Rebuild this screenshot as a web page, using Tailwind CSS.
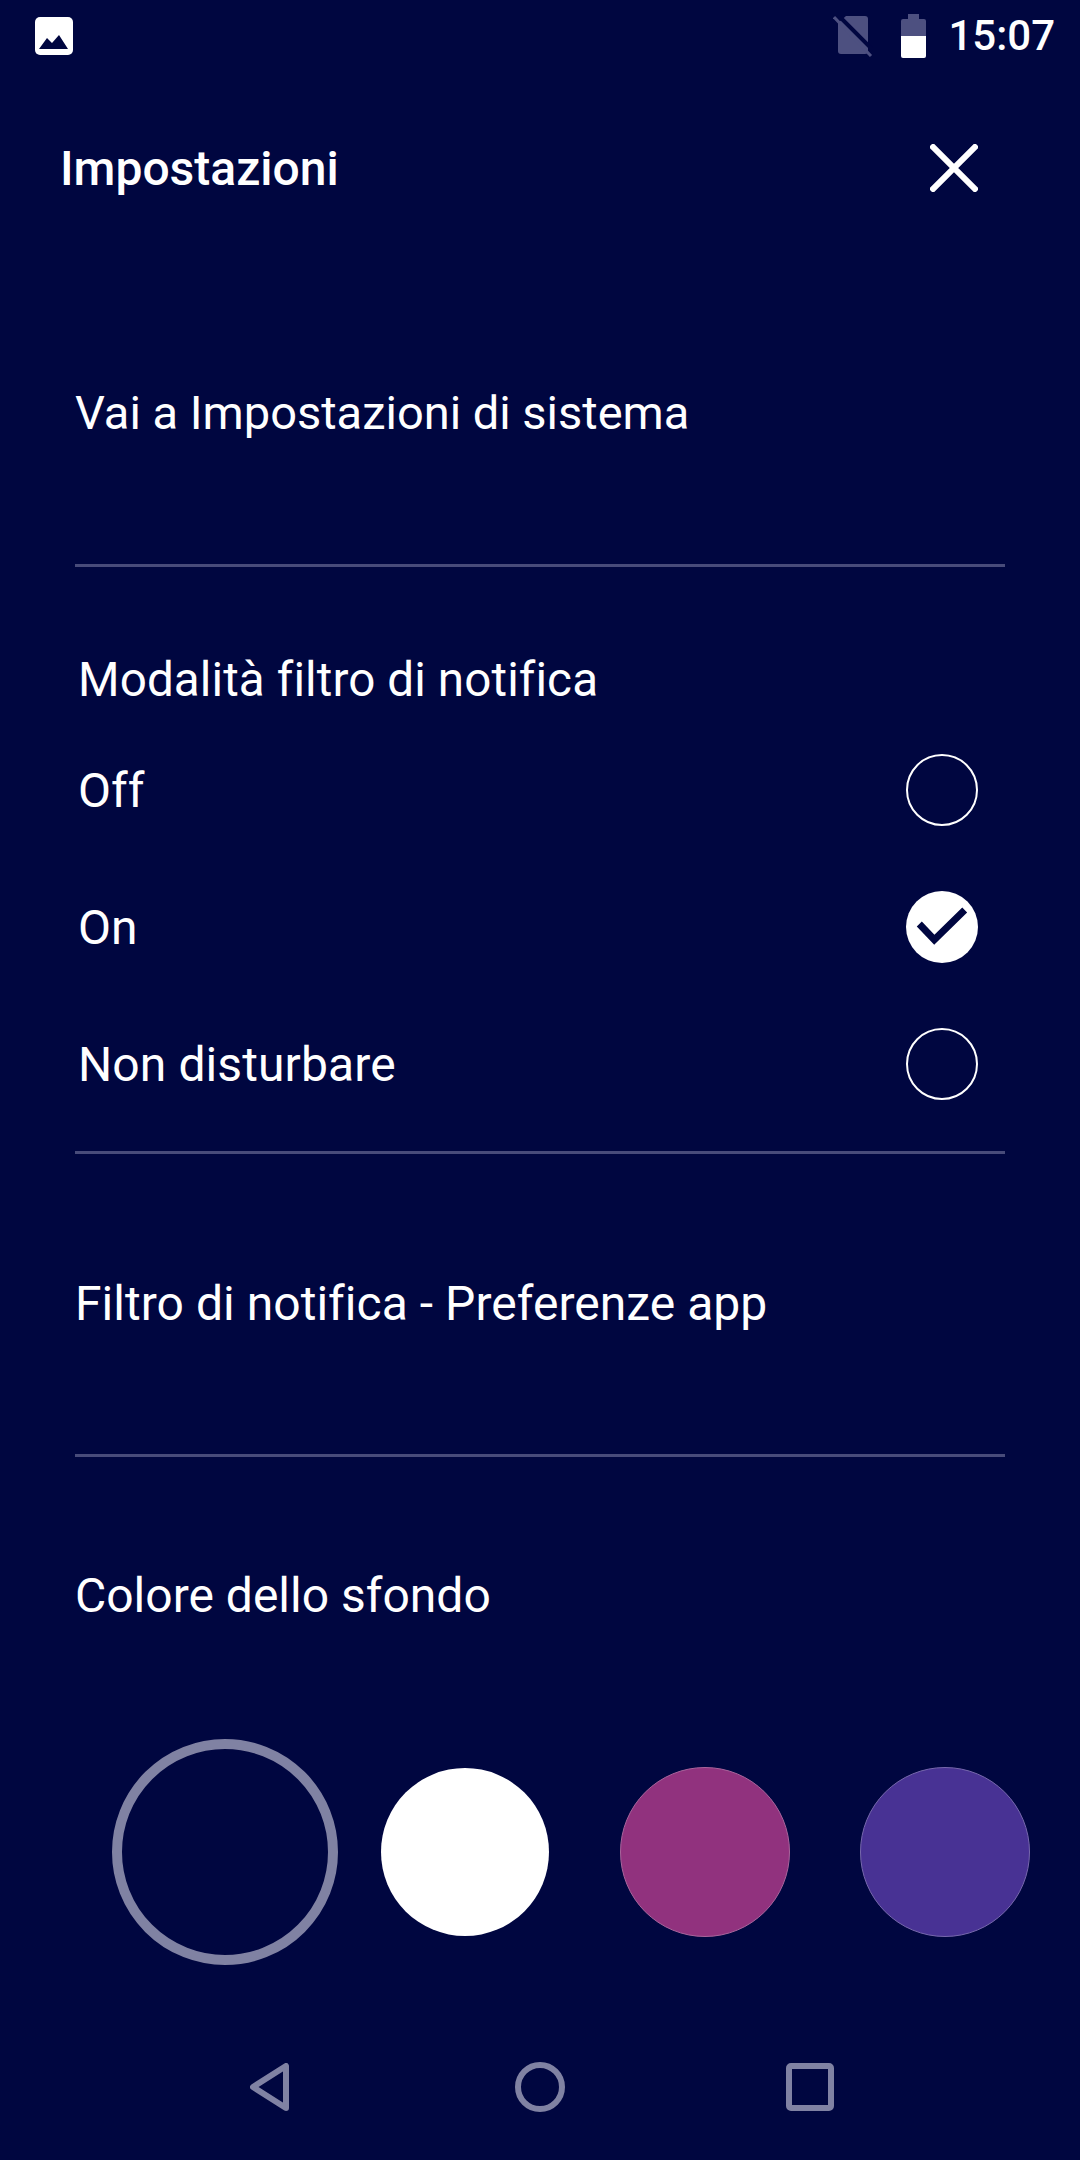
<!DOCTYPE html>
<html>
  <head>
    <title>Impostazioni</title>
    <script src="https://cdn.jsdelivr.net/npm/@tailwindcss/browser@4"></script>
  </head>
  <body class="bg-[#000640]">
    <div class="w-[1080px] h-[2160px] flex flex-col bg-[#000640] text-white font-['Roboto',sans-serif]">
      <!-- status bar -->
      <div class="h-[72px] pl-[35px] pr-[25px] flex items-center">
        <svg class="w-[38px] h-[38px]" viewBox="0 0 38 38">
          <rect width="38" height="38" rx="5" fill="#fff" />
          <path d="M4 32 L12 21 L17 26 L24 18 L33 32 Z" fill="#000640" />
        </svg>
        <div class="ml-auto flex items-center">
          <svg class="w-[40px] h-[42px]" viewBox="0 0 40 42">
            <path d="M5 8 V36 Q5 39 8 39 H32 Q35 39 35 36 V4 Q35 1 32 1 H13 Z" fill="#4d5080" />
            <path d="M4 -1 L40 35" stroke="#000640" stroke-width="4" />
            <path d="M1 2 L38 41" stroke="#4d5080" stroke-width="3" />
          </svg>
          <svg class="ml-[28px] w-[25px] h-[44px]" viewBox="0 0 25 44">
            <path d="M7 0 H18 V5 H23 Q25 5 25 7 V22 H0 V7 Q0 5 2 5 H7 Z" fill="#4d5080" />
            <path d="M0 22 H25 V42 Q25 44 23 44 H2 Q0 44 0 42 Z" fill="#fff" />
          </svg>
          <span class="ml-[22px] text-[42px] leading-none font-medium">15:07</span>
        </div>
      </div>
      <!-- header -->
      <div class="h-[96px] mt-[48px] pl-[60px] pr-[102px] flex items-center justify-between">
        <span class="mt-[2px] text-[48px] font-medium leading-none">Impostazioni</span>
        <svg class="w-[48px] h-[48px]" viewBox="0 0 48 48">
          <path d="M1 1 L47 47 M47 1 L1 47" stroke="#fff" stroke-width="6" />
        </svg>
      </div>
      <!-- menu -->
      <div class="mx-[75px] h-[351px] pt-[173px] border-b-[3px] border-[#484b7a]">
        <p class="text-[47px] leading-[48px]">Vai a Impostazioni di sistema</p>
      </div>
      <div class="mx-[75px] h-[587px] pt-[89px] pl-[3px] pr-[27px] border-b-[3px] border-[#484b7a] flex flex-col">
        <p class="text-[47.6px] leading-[48px] tracking-[0.1px] mb-[50px]">Modalità filtro di notifica</p>
        <div class="h-[72px] flex items-center justify-between">
          <span class="mt-[2px] text-[48px] leading-none">Off</span>
          <div class="w-[72px] h-[72px] rounded-full border-2 border-white"></div>
        </div>
        <div class="h-[72px] mt-[65px] flex items-center justify-between">
          <span class="mt-[2px] text-[48px] leading-none">On</span>
          <svg class="w-[72px] h-[72px]" viewBox="0 0 72 72">
            <circle cx="36" cy="36" r="36" fill="#fff" />
            <path d="M13.3 33 L28.3 48.7 L58.7 19" fill="none" stroke="#000640" stroke-width="7" />
          </svg>
        </div>
        <div class="h-[72px] mt-[65px] flex items-center justify-between">
          <span class="mt-[2px] text-[48px] leading-none tracking-[0.1px]">Non disturbare</span>
          <div class="w-[72px] h-[72px] rounded-full border-2 border-white"></div>
        </div>
      </div>
      <div class="mx-[75px] h-[303px] pt-[126px] border-b-[3px] border-[#484b7a]">
        <p class="text-[48px] leading-none tracking-[0.04px]">Filtro di notifica - Preferenze app</p>
      </div>
      <div class="mx-[75px] mt-[115px]">
        <p class="text-[48px] leading-none">Colore dello sfondo</p>
      </div>
      <!-- swatches -->
      <div class="mt-[119px] pl-[112px] h-[226px] flex items-center">
        <div class="w-[226px] h-[226px] rounded-full border-[10px] border-[#8082a3]"></div>
        <div class="ml-[43px] w-[168px] h-[168px] rounded-full bg-white"></div>
        <div class="ml-[71px] w-[170px] h-[170px] rounded-full bg-[#91327e] border border-[#a9659c]"></div>
        <div class="ml-[70px] w-[170px] h-[170px] rounded-full bg-[#483294] border border-[#7768ad]"></div>
      </div>
      <!-- nav bar -->
      <div class="mt-[97px] h-[50px] pl-[250px] flex items-center">
        <svg class="w-[40px] h-[48px]" viewBox="0 0 40 48">
          <path d="M36 3 V45 L3 24 Z" fill="none" stroke="#8082a3" stroke-width="6" stroke-linejoin="round" />
        </svg>
        <svg class="ml-[225px] w-[50px] h-[50px]" viewBox="0 0 50 50">
          <circle cx="25" cy="25" r="22" fill="none" stroke="#8082a3" stroke-width="6" />
        </svg>
        <svg class="ml-[221px] w-[48px] h-[48px]" viewBox="0 0 48 48">
          <rect x="3" y="3" width="42" height="42" rx="2" fill="none" stroke="#8082a3" stroke-width="6" />
        </svg>
      </div>
    </div>
  </body>
</html>
